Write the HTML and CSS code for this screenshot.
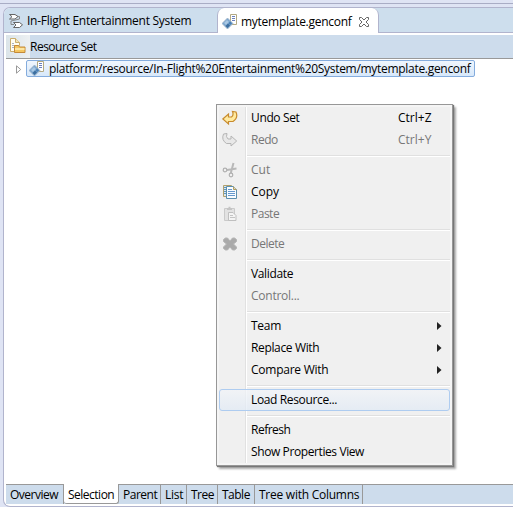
FILE: index.html
```
<!DOCTYPE html>
<html lang="en">
<head>
<meta charset="utf-8">
<title>mytemplate.genconf</title>
<link rel="stylesheet" href="styles.css">
</head>
<body>
<svg class="defs" width="0" height="0" aria-hidden="true">
  <symbol id="genconf" viewBox="0 0 16 16">
    <path d="M8.500.5h6v10h-6z" fill="#fff" stroke="#b3a983"/>
    <path d="M10 2.500h3M10 4.500h3M10 6.500h3" stroke="#6a80bd"/>
    <path d="M5.500 4 11 9.500 5.500 15 0 9.500z" fill="#7ba6cf" stroke="#a3b6c8" stroke-width=".8"/>
    <path d="M2 9 5 6l2 2-3 3z" fill="#a9c8e4"/>
    <path d="M3.500 12 6 9.500l2 2L5.500 14z" fill="#3c6e9f"/>
    <path d="M6.500 9 8.500 7.500l1.500 2L8 11z" fill="#4b80b4"/>
  </symbol>
</svg>
<main class="editor">
  <nav class="tabs">
    <div class="tab">
      <svg class="icon" viewBox="0 0 16 16"><path d="M1.500 1.500h5.500l3 2-3 2.500H1.500l2.500-2.300zM5.500 9.500h6l3 2.300-3 2.700h-6l2.500-2.500z" fill="#fff" stroke="#666"/><path d="M10 3.500h1.500v2.500l-8.500 2v3.500h3" fill="none" stroke="#888"/></svg>
      <span class="t-system">In-Flight Entertainment System</span>
    </div>
    <div class="tab active">
      <svg class="icon"><use href="#genconf"/></svg>
      <span class="t-file">mytemplate.genconf</span>
      <svg class="close" viewBox="0 0 12 12"><path d="M1.500 1.500h2L6 4l2.500-2.500h2v2L8 6l2.500 2.500v2h-2L6 8l-2.500 2.500h-2v-2L4 6 1.500 3.500z" fill="#fff" stroke="#666"/></svg>
    </div>
  </nav>
  <section class="page">
    <header class="title">
      <span class="title-icon"><svg class="icon" viewBox="0 0 16 16"><path d="M.5 13.500V.5h5l4 4v3h-5v6z" fill="#fffdf2" stroke="#c9ad6c"/><path d="M5.500.5v4h4" fill="#f4e3b3" stroke="#c9ad6c"/><path d="M2 5.500h2M2 7.500h2M2 9.500h2" fill="none" stroke="#aab3c0"/><path d="M4.500 14.500v-7h4l1 1.500h5.500v5.500z" fill="#f5c65f" stroke="#c48a3a"/><path d="M5 10h9.500v2H5z" fill="#fde6a2"/></svg></span>
      <span class="t-set">Resource Set</span>
    </header>
    <div class="tree">
      <svg class="expander" viewBox="0 0 6 9"><path d="M.5.8v7.400L4.700 4.500z" fill="#fff" stroke="#999"/></svg>
      <div class="node"><svg class="icon"><use href="#genconf"/></svg><span class="t-path">platform:/resource/In-Flight%20Entertainment%20System/mytemplate.genconf</span></div>
    </div>
    <footer class="pages">
      <span class="pg p1"><b>Overview</b></span><span class="pg p2 current"><b>Selection</b></span><span class="pg p3"><b>Parent</b></span><span class="pg p4"><b>List</b></span><span class="pg p5"><b>Tree</b></span><span class="pg p6"><b>Table</b></span><span class="pg p7"><b>Tree with Columns</b></span>
    </footer>
  </section>
</main>
<div class="menu">
  <div class="item"><svg class="icon" viewBox="0 0 16 16"><path d="M.8 9 6.500 4v3h3q2.500-2 1-5.500l3.500.5q2.500 6-3 9.500H6.500V14z" fill="#ffeaa0" stroke="#c88b2d" stroke-width="1.200"/></svg><span class="m-undo">Undo Set</span><kbd class="k-z">Ctrl+Z</kbd></div>
  <div class="item off"><svg class="icon" viewBox="0 0 16 16"><path d="M14.700 9 9 4v3H6Q3.500 5 5 1.500L1.500 2q-2.500 6 3 9.500H9V14z" fill="#e8e8e8" stroke="#b5b5b5"/></svg><span class="m-redo">Redo</span><kbd class="k-y">Ctrl+Y</kbd></div>
  <hr>
  <div class="item off"><svg class="icon" viewBox="0 0 16 16"><path d="M11.500 1 8.800 11M14.500 6.500 5 8" stroke="#b8b8b8" stroke-width="2"/><circle cx="3" cy="8" r="1.800" fill="none" stroke="#b0b0b0" stroke-width="1.200"/><circle cx="9" cy="13" r="1.800" fill="none" stroke="#b0b0b0" stroke-width="1.200"/></svg><span class="m-cut">Cut</span></div>
  <div class="item"><svg class="icon" viewBox="0 0 16 16"><path d="M1.500 1.500h8v11h-8z" fill="#dce8f0" stroke="#b1a06c"/><path d="M2 3.500h2M2 5.500h2M2 7.500h2M2 9.500h2" stroke="#5e96bd"/><path d="M4.500 2.500h7l3 3v9h-10z" fill="#f8fcff" stroke="#5c8fae"/><path d="M11.500 2.500v3h3" fill="#e9d9ae" stroke="#b19c62"/><path d="M6 5.500h4M6 7.500h7M6 9.500h7M6 11.500h7" stroke="#6598cd"/></svg><span class="m-copy">Copy</span></div>
  <div class="item off"><svg class="icon" viewBox="0 0 16 16"><path d="M2.500 2.500h10v12h-10z" fill="#e2e2e2" stroke="#cacaca"/><path d="M5 4V2h1.500V.8h2V2H10v2z" fill="#c4c4c4"/><path d="M6.500 6.500h4.500l3 3v5H6.500z" fill="#f4f4f4" stroke="#bfbfbf"/><path d="M8 9.500h3M8 11.500h5" stroke="#c4c4c4"/></svg><span class="m-paste">Paste</span></div>
  <hr>
  <div class="item off"><svg class="icon" viewBox="0 0 16 16"><path d="M1.500 3.500 3.500 2h2L8 5l2.500-3h2l2 1.500v2L11.500 8l3 3v1.500l-2 1.500h-2L8 11l-2.500 3h-2l-2-1.500V11l3-3-3-2.500z" fill="#aaa" stroke="#b5b5b5"/></svg><span class="m-delete">Delete</span></div>
  <hr>
  <div class="item"><i></i><span class="m-validate">Validate</span></div>
  <div class="item off"><i></i><span class="m-control">Control...</span></div>
  <hr>
  <div class="item"><i></i><span class="m-team">Team</span><svg class="arrow" viewBox="0 0 5 8"><path d="M0 0v8l4.500-4z"/></svg></div>
  <div class="item"><i></i><span class="m-replace">Replace With</span><svg class="arrow" viewBox="0 0 5 8"><path d="M0 0v8l4.500-4z"/></svg></div>
  <div class="item"><i></i><span class="m-compare">Compare With</span><svg class="arrow" viewBox="0 0 5 8"><path d="M0 0v8l4.500-4z"/></svg></div>
  <hr>
  <div class="item hover"><i></i><span class="m-load">Load Resource...</span></div>
  <hr>
  <div class="item"><i></i><span class="m-refresh">Refresh</span></div>
  <div class="item"><i></i><span class="m-show">Show Properties View</span></div>
</div>
</body>
</html>
```
FILE: styles.css
```
* { box-sizing: border-box; }
body {
  margin: 0; width: 513px; height: 507px; overflow: hidden;
  background: linear-gradient(#dfe4f4 3px, #a9adc5 3px, #a9adc5 4px, #dfe4f4 4px);
  font: 12px/16px "Open Sans", "Noto Sans", sans-serif;
  color: #000; white-space: nowrap; padding: 7px 0 0 3px;
}
.defs { position: absolute; }
.icon { width: 16px; height: 16px; flex: none; display: block; }
.editor {
  height: 500px; display: flex; flex-direction: column; background: #fff;
  border: 1px solid #b1b4cd; border-right: 0; border-radius: 7px 0 0 7px; overflow: hidden;
}
.tabs { height: 25px; flex: none; display: flex; background: #cddeed; border-bottom: 1px solid #b1b4cd; }
.tab { display: flex; align-items: center; width: 213px; padding: 2px 0 0 4px; }
.tab span { margin-left: 3px; }
.tab.active {
  width: 162px; height: 25px; background: #fff; border: 1px solid #b1b4cd;
  border-width: 0 1px; border-radius: 7px 7px 0 0;
}
.close { width: 12px; height: 12px; margin-left: 6px; }
.page { flex: 1; display: flex; flex-direction: column; padding: 2px 0 2px 2px; }
.title { height: 24px; display: flex; align-items: center; background: #cddcec; border-bottom: 1px solid #999; }
.title-icon { width: 24px; height: 23px; padding: 3px 4px; background: linear-gradient(90deg, #dbe4e9, #edf0f2); }
.tree { flex: 1; display: flex; align-items: flex-start; padding: 1px 0 0 10px; }
.expander { width: 6px; height: 9px; margin: 5px 4px 0 0; }
.node {
  display: flex; align-items: center; width: 449px; height: 17px; padding-left: 2px;
  background: linear-gradient(#f0f6fd, #d7e8fa); border: 1px solid #84acdd; border-radius: 2px;
}
.node span { margin-left: 4px; }
.pages { display: flex; height: 20px; background: #cddcec; border-top: 1px solid #999; }
.pg { display: flex; align-items: center; padding-left: 4px; border-right: 1px solid #999; height: 19px; }
.pg b { font-weight: 400; }
.current { background: #fff; margin-top: -1px; height: 20px; padding-top: 2px; border-bottom: 1px solid #999; border-radius: 0 0 3px 3px; }
.p1 { width: 58px; } .p2 { width: 55px; } .p3 { width: 42px; } .p4 { width: 26px; }
.p5 { width: 31px; } .p6 { width: 37px; } .p7 { width: 108px; }

.menu {
  position: absolute; left: 216px; top: 104px; width: 237px; height: 362px; padding: 2px;
  border: 1px solid #979797; background: linear-gradient(90deg, transparent 26px, #e1e1e1 26px, #e1e1e1 27px, #fff 27px, #fff 28px, transparent 28px) 2px 2px / 231px 356px no-repeat, #f0f0f0;
  box-shadow: inset 0 0 0 2px #f5f5f5, 1px 1px 1px #777, 3px 3px 2px #aaa;
}
.item { display: flex; align-items: center; height: 22px; padding-left: 3px; }
.item > i { width: 16px; }
.item > span { margin-left: 13px; }
.item kbd { margin-left: auto; width: 52px; font: inherit; }
.off { color: #777; }
.menu hr { height: 8px; margin: 0 0 0 28px; border: 0; background: linear-gradient(transparent 4px, #e0e0e0 4px, #e0e0e0 5px, #fff 5px, #fff 6px, transparent 6px); }
.arrow { width: 5px; height: 8px; margin: 0 8px 0 auto; fill: #222; }
.hover { border: 1px solid #aeccf0; border-radius: 3px; padding-left: 2px; background: linear-gradient(#f1f4f8bb, #e1eaf5bb); }

/* tracking */
.t-system { letter-spacing: -.27px; }
.t-path { letter-spacing: -.3px; }
.t-file { letter-spacing: -.27px; }
.t-set { letter-spacing: -.5px; }
.m-undo, .m-load, .m-replace, .m-validate { letter-spacing: -.36px; }
.m-show { letter-spacing: -.4px; }
.m-delete, .m-refresh, .m-paste, .m-redo { letter-spacing: -.5px; }
.m-compare, .m-control, .m-team { letter-spacing: -.25px; }
.p1, .p2, .p3, .p5, .p6 { letter-spacing: -.5px; }
.p4, .p7 { letter-spacing: -.25px; }
```
